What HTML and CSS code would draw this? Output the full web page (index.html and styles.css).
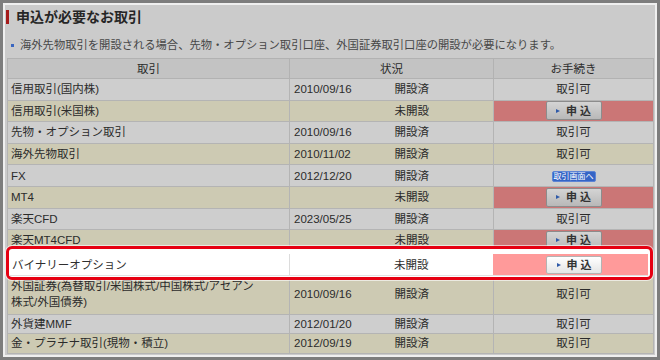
FILE: index.html
```html
<!DOCTYPE html>
<html lang="ja">
<head>
<meta charset="utf-8">
<title>申込が必要なお取引</title>
<link rel="stylesheet" href="styles.css">
</head>
<body>
<div class="frame">
  <h1 class="title"><span class="bar"></span>申込が必要なお取引</h1>
  <p class="note"><span class="dot"></span>海外先物取引を開設される場合、先物・オプション取引口座、外国証券取引口座の開設が必要になります。</p>
  <table class="grid">
    <colgroup><col class="c-name"><col class="c-date"><col class="c-st"><col class="c-act"></colgroup>
    <thead>
      <tr><th>取引</th><th colspan="2">状況</th><th>お手続き</th></tr>
    </thead>
    <tbody>
      <tr class="w"><td class="name">信用取引(国内株)</td><td class="date">2010/09/16</td><td class="st">開設済</td><td class="act">取引可</td></tr>
      <tr class="t"><td class="name">信用取引(米国株)</td><td class="date"></td><td class="st">未開設</td><td class="act req"><span class="btn"><i class="tri"></i>申込</span></td></tr>
      <tr class="w"><td class="name">先物・オプション取引</td><td class="date">2010/09/16</td><td class="st">開設済</td><td class="act">取引可</td></tr>
      <tr class="t"><td class="name">海外先物取引</td><td class="date">2010/11/02</td><td class="st">開設済</td><td class="act">取引可</td></tr>
      <tr class="w"><td class="name">FX</td><td class="date">2012/12/20</td><td class="st">開設済</td><td class="act"><span class="badge">取引画面へ</span></td></tr>
      <tr class="t"><td class="name">MT4</td><td class="date"></td><td class="st">未開設</td><td class="act req"><span class="btn"><i class="tri"></i>申込</span></td></tr>
      <tr class="w"><td class="name">楽天CFD</td><td class="date">2023/05/25</td><td class="st">開設済</td><td class="act">取引可</td></tr>
      <tr class="t"><td class="name">楽天MT4CFD</td><td class="date"></td><td class="st">未開設</td><td class="act req"><span class="btn"><i class="tri"></i>申込</span></td></tr>
      <tr class="w under"><td class="name">バイナリーオプション</td><td class="date"></td><td class="st">未開設</td><td class="act req"><span class="btn"><i class="tri"></i>申込</span></td></tr>
      <tr class="t tall"><td class="name">外国証券(為替取引/米国株式/中国株式/アセアン<br>株式/外国債券)</td><td class="date">2010/09/16</td><td class="st">開設済</td><td class="act">取引可</td></tr>
      <tr class="w low"><td class="name">外貨建MMF</td><td class="date">2012/01/20</td><td class="st">開設済</td><td class="act">取引可</td></tr>
      <tr class="t low"><td class="name">金・プラチナ取引(現物・積立)</td><td class="date">2012/09/19</td><td class="st">開設済</td><td class="act">取引可</td></tr>
    </tbody>
  </table>

  <div class="focus">
    <table class="focus-row">
      <colgroup><col class="f-name"><col class="c-date"><col class="c-st"><col class="f-act"></colgroup>
      <tr><td class="name">バイナリーオプション</td><td class="date"></td><td class="st">未開設</td><td class="act req-lit"><span class="btn lit"><i class="tri"></i>申込</span></td></tr>
    </table>
  </div>
</div>
</body>
</html>
```

FILE: styles.css
```css
html, body {
  margin: 0;
  padding: 0;
}

body {
  background: #7d7d7d;
  font-family: "Liberation Sans", "Noto Sans CJK JP", sans-serif;
  color: #2b2b2b;
}

.frame {
  position: relative;
  margin: 3px;
  height: 350px;
  border: 2px solid #efefef;
  background: #cbcbcb;
  overflow: hidden;
}

.title {
  display: flex;
  align-items: center;
  gap: 7px;
  margin: 0;
  padding: 3px 0 0 1px;
  height: 18px;
  line-height: 18px;
  font-size: 14px;
  font-weight: bold;
  color: #262626;
}

.bar {
  display: block;
  width: 3px;
  height: 14px;
  background: #a51a1a;
}

.note {
  margin: 11px 0 0;
  padding-left: 6px;
  line-height: 16px;
  font-size: 11.3px;
  color: #474747;
  display: flex;
  align-items: center;
}

.dot {
  display: inline-block;
  width: 3px;
  height: 3px;
  margin-right: 6px;
  background: #3a66c0;
}

.grid {
  border-collapse: collapse;
  table-layout: fixed;
  width: 646px;
  margin: 5px 0 0 2px;
  font-size: 11.5px;
}

.c-name { width: 282px; }
.c-date { width: 101px; }
.c-st { width: 103px; }
.c-act { width: 160px; }

.grid th {
  height: 19px;
  padding: 0;
  font-weight: normal;
  background: #c3c3c3;
  border: 1px solid #b2b2b2;
  line-height: 16px;
}

.grid td {
  height: 20.6px;
  padding: 0 3px;
  line-height: 16px;
  border: 1px solid #b4b4b4;
  white-space: nowrap;
}

.grid td.date { border-right: hidden; padding-left: 4px; }
.grid td.st { border-left: hidden; padding-left: 4px; }
.grid td.act { text-align: center; padding: 0; }

.grid tr.w td { background: #cecece; }
.grid tr.t td { background: #cdcab3; }
.grid tr td.req { background: #cb7676; }

/* row lying fully under the highlighted overlay */
.grid tr.under { visibility: hidden; }

.grid tr.tall td { height: 40.4px; }
.grid tr.low td { height: 18.5px; }

.btn {
  display: inline-flex;
  align-items: center;
  justify-content: center;
  box-sizing: border-box;
  width: 56px;
  height: 19px;
  vertical-align: middle;
  border: 1px solid #8c8c8c;
  border-radius: 2px;
  background: linear-gradient(#d4d4d4, #b8b8b8);
  font-size: 11px;
  font-weight: bold;
  letter-spacing: 3px;
  color: #333;
  padding-left: 3px;
}

.tri {
  display: inline-block;
  width: 0;
  height: 0;
  margin-right: 6px;
  border-left: 4px solid #2f5aa8;
  border-top: 2.5px solid transparent;
  border-bottom: 2.5px solid transparent;
}

.badge {
  display: inline-block;
  vertical-align: middle;
  padding: 0 1px;
  font-size: 8px;
  line-height: 9px;
  color: #fff;
  background: #3565c6;
  border: 1px solid #5d84d4;
  border-radius: 2px;
  letter-spacing: 0;
}

.focus {
  position: absolute;
  left: 1px;
  top: 241px;
  box-sizing: border-box;
  width: 647px;
  height: 34px;
  padding: 5px 2px 0 0;
  border: 3px solid #e60012;
  border-radius: 6px;
  background: #fff;
  box-shadow: 0 0 0 1px rgba(255, 255, 255, 0.6);
}

.focus-row {
  border-collapse: collapse;
  table-layout: fixed;
  width: 639px;
  font-size: 11.5px;
  color: #2e2e2e;
}

.f-name { width: 280px; }
.f-act { width: 155px; }

.focus-row td {
  height: 21px;
  padding: 0 3px;
  line-height: 16px;
  border-bottom: 1px solid #e2e2e2;
  white-space: nowrap;
}

.focus-row td.name { border-right: 1px solid #dcdcdc; }
.focus-row td.date, .focus-row td.st { padding-left: 4px; }
.focus-row td.act { text-align: center; padding: 0 0 0 7px; }
.focus-row td.req-lit { background: #ff9a9a; }

.btn.lit {
  height: 18px;
  border-color: #b3b3b3;
  background: linear-gradient(#ffffff, #e4e4e4);
}
```
